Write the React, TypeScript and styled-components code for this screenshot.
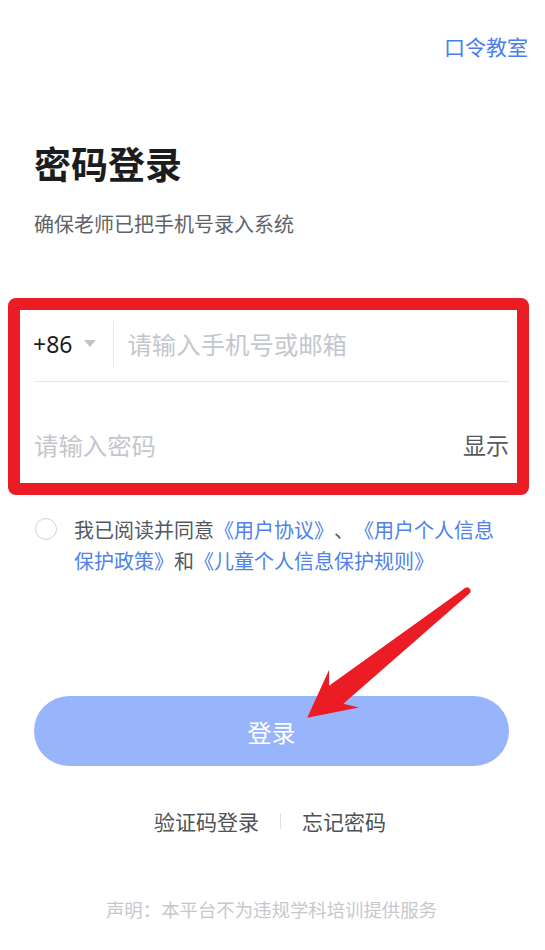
import React from "react";
import styled, { createGlobalStyle } from "styled-components";

const GlobalStyle = createGlobalStyle`
  html, body { margin: 0; padding: 0; background: #ffffff; }
  body { font-family: "Noto Sans CJK SC", "Noto Sans", sans-serif; text-spacing-trim: space-all; }
  * { box-sizing: border-box; }
`;

const Page = styled.div`
  position: relative;
  width: 545px;
  min-height: 950px;
  padding: 31px 36px 0 34px;
  background: #ffffff;
  font-family: "Noto Sans CJK SC", "Noto Sans", sans-serif;
`;

const Header = styled.div`
  display: flex;
  justify-content: flex-end;
  margin-right: -19px;
`;

const TopLink = styled.a`
  font-size: 21px;
  line-height: 30px;
  color: #4a7ef0;
  text-decoration: none;
`;

const Title = styled.h1`
  margin: 77px 0 0;
  font-size: 37px;
  line-height: 50px;
  font-weight: 700;
  color: #1c1c1e;
`;

const Subtitle = styled.p`
  margin: 22px 0 0;
  font-size: 20px;
  line-height: 28px;
  color: #5f6368;
`;

const Form = styled.div`
  position: relative;
  margin-top: 68px;
`;

const Highlight = styled.div`
  position: absolute;
  top: -8px;
  left: -26px;
  right: -20px;
  bottom: -13px;
  border: 12px solid #ec1c24;
  border-radius: 8px;
  pointer-events: none;
`;

const Row = styled.div<{ $divider?: boolean; $gapTop?: number }>`
  display: flex;
  align-items: center;
  height: 76px;
  margin-top: ${(p) => p.$gapTop ?? 0}px;
  border-bottom: ${(p) => (p.$divider ? "1px solid #e4e6ea" : "none")};
`;

const Code = styled.span`
  display: flex;
  align-items: center;
  gap: 12px;
  margin-left: -1px;
  font-family: "Noto Sans", Roboto, sans-serif;
  font-size: 23px;
  color: #1c1c1e;
`;

const Caret = styled.span`
  width: 0;
  height: 0;
  border-left: 6px solid transparent;
  border-right: 6px solid transparent;
  border-top: 7px solid #c0c4cb;
`;

const VLine = styled.span`
  width: 1px;
  height: 46px;
  margin: 0 13px 0 17px;
  background: #e6e8eb;
`;

const Field = styled.input`
  flex: 1;
  min-width: 0;
  border: none;
  outline: none;
  background: transparent;
  padding: 0;
  font-family: "Noto Sans CJK SC", "Noto Sans", sans-serif;
  font-size: 24.4px;
  color: #1c1c1e;
  &::placeholder { color: #c3c7cd; }
`;

const Toggle = styled.span`
  font-size: 23px;
  color: #55595f;
`;

const Agree = styled.div`
  display: flex;
  align-items: flex-start;
  margin-top: 32px;
`;

const Radio = styled.span`
  flex: none;
  width: 22px;
  height: 22px;
  margin: 4px 17px 0 1px;
  border: 1px solid #cfd2d6;
  border-radius: 50%;
`;

const AgreeText = styled.p`
  margin: 0;
  font-size: 20px;
  line-height: 31px;
  color: #55595f;
  text-spacing-trim: space-all;
`;

const Link = styled.span`
  color: #4f82ea;
`;

const LoginButton = styled.button`
  display: block;
  width: 100%;
  height: 70px;
  margin-top: 120px;
  border: none;
  border-radius: 35px;
  background: #98b5fb;
  color: #ffffff;
  font-family: "Noto Sans CJK SC", "Noto Sans", sans-serif;
  font-size: 24px;
`;

const Links = styled.div`
  display: flex;
  justify-content: center;
  align-items: center;
  margin-top: 40px;
  margin-left: -3px;
`;

const SubLink = styled.span`
  font-size: 21px;
  line-height: 30px;
  color: #4e5257;
`;

const Sep = styled.span`
  width: 1px;
  height: 16px;
  margin: 0 21px 0 21px;
  background: #dcdfe3;
`;

const Notice = styled.p`
  margin: 60px 0 0;
  text-align: center;
  font-size: 18.4px;
  line-height: 26px;
  color: #c5c9ce;
  margin-left: 0;
`;

const ArrowLayer = styled.svg`
  position: absolute;
  left: 0;
  top: 0;
  width: 545px;
  height: 950px;
  pointer-events: none;
`;

export default function App() {
  return (
    <>
      <GlobalStyle />
      <Page>
        <Header>
          <TopLink>口令教室</TopLink>
        </Header>
        <Title>密码登录</Title>
        <Subtitle>确保老师已把手机号录入系统</Subtitle>
        <Form>
          <Row $divider>
            <Code>
              +86
              <Caret />
            </Code>
            <VLine />
            <Field placeholder="请输入手机号或邮箱" />
          </Row>
          <Row $gapTop={24}>
            <Field type="password" placeholder="请输入密码" />
            <Toggle>显示</Toggle>
          </Row>
          <Highlight />
        </Form>
        <Agree>
          <Radio />
          <AgreeText>
            我已阅读并同意<Link>《用户协议》</Link>、<Link>《用户个人信息保护政策》</Link>和
            <Link>《儿童个人信息保护规则》</Link>
          </AgreeText>
        </Agree>
        <LoginButton>登录</LoginButton>
        <Links>
          <SubLink>验证码登录</SubLink>
          <Sep />
          <SubLink>忘记密码</SubLink>
        </Links>
        <Notice>声明：本平台不为违规学科培训提供服务</Notice>
        <ArrowLayer viewBox="0 0 545 950">
          <g transform="translate(467 591) rotate(141.56)" fill="#ec1c24">
            <circle cx="0" cy="0" r="3.5" />
            <path d="M0 -3.5 L167 -11.5 L157 -24 L204 0 L157 24 L167 11.5 L0 3.5 Z" />
          </g>
        </ArrowLayer>
      </Page>
    </>
  );
}
